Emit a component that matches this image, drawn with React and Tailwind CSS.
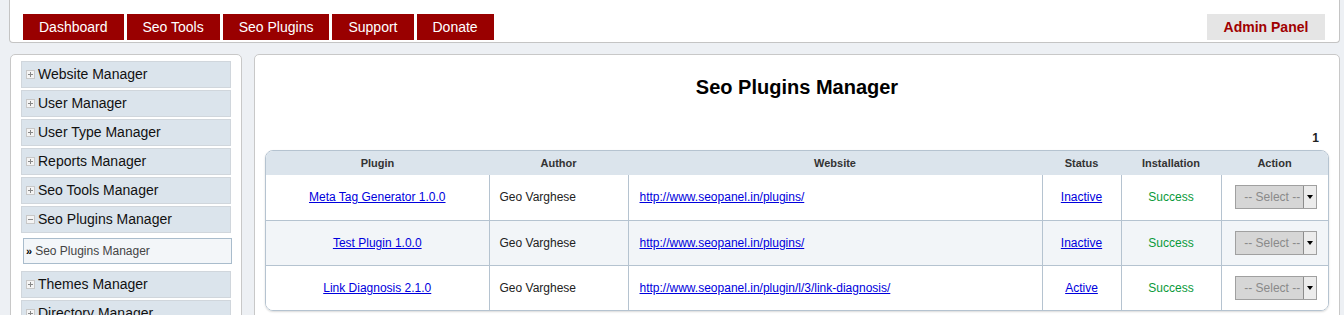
import { useState } from 'react';

const tabs = ['Dashboard', 'Seo Tools', 'Seo Plugins', 'Support', 'Donate'];

const menu = [
  'Website Manager',
  'User Manager',
  'User Type Manager',
  'Reports Manager',
  'Seo Tools Manager',
  'Seo Plugins Manager',
  'Themes Manager',
  'Directory Manager',
];

const plugins = [
  { name: 'Meta Tag Generator 1.0.0', author: 'Geo Varghese', site: 'http://www.seopanel.in/plugins/', status: 'Inactive' },
  { name: 'Test Plugin 1.0.0', author: 'Geo Varghese', site: 'http://www.seopanel.in/plugins/', status: 'Inactive' },
  { name: 'Link Diagnosis 2.1.0', author: 'Geo Varghese', site: 'http://www.seopanel.in/plugin/l/3/link-diagnosis/', status: 'Active' },
];

function Toggle({ open }) {
  return (
    <span className="flex h-[9px] w-[9px] items-center justify-center border border-[#c8c8c8] bg-[#f4f4f4]">
      <span className="relative block h-[5px] w-[5px]">
        <span className="absolute left-0 top-[2px] h-px w-[5px] bg-[#888]" />
        {!open && <span className="absolute left-[2px] top-0 h-[5px] w-px bg-[#888]" />}
      </span>
    </span>
  );
}

function SelectBox() {
  return (
    <div className="mx-auto flex h-[24px] w-[82px] border border-[#a0a0a0] bg-[#d6d6d6]">
      <span className="flex-1 pl-[5px] text-[12px] leading-[22px] text-[#8a8a8a]">-- Select --</span>
      <span className="flex w-[13px] items-center justify-center border-l border-[#8c8c8c] bg-[#ececec]">
        <span className="h-0 w-0 border-x-[3px] border-t-[4px] border-x-transparent border-t-black" />
      </span>
    </div>
  );
}

export default function App() {
  const [active] = useState('Seo Plugins Manager');

  return (
    <div className="h-[315px] overflow-hidden bg-[#edf0f4] font-['Liberation_Sans',Arial,sans-serif]">
      {/* top bar */}
      <div className="ml-[9px] mr-[4px] flex h-[43px] items-end justify-between rounded-b-[4px] border-x border-b border-[#c4c4c4] bg-white pb-[2px] pl-[13px] pr-[14px]">
        <div className="flex gap-[3px]">
          {tabs.map(t => (
            <div key={t} className="flex h-[26px] items-center bg-[#990000] px-4 text-[14px] text-white">
              {t}
            </div>
          ))}
        </div>
        <div className="flex h-[26px] w-[118px] items-center justify-center bg-[#e5e5e5] text-[14px] font-bold text-[#a00000]">
          Admin Panel
        </div>
      </div>

      <div className="mt-[11px] flex gap-[12px] pl-[10px] pr-[4px]">
        {/* sidebar */}
        <div className="h-[300px] w-[232px] shrink-0 rounded-t-[5px] border border-[#c8c8c8] bg-white px-[10px] pt-[6px]">
          <div className="flex flex-col gap-[2px]">
            {menu.map(m => (
              <div key={m}>
                <div className="flex h-[27px] items-center gap-[3px] border border-[#d0d6dc] bg-[#dbe4ec] pl-[4px] text-[14px] text-[#111]">
                  <Toggle open={m === active} />
                  {m}
                </div>
                {m === active && (
                  <div className="mb-[5px] mt-[5px] pl-[2px]">
                    <div className="-mr-px flex h-[26px] items-center border border-[#a9bccc] bg-[#f3f6f9] pl-[2px] text-[12px] text-[#444]">
                      <span className="mr-[3px] text-[11px] font-bold text-black">»</span>
                      Seo Plugins Manager
                    </div>
                  </div>
                )}
              </div>
            ))}
          </div>
        </div>

        {/* main */}
        <div className="h-[300px] flex-1 rounded-t-[5px] border border-[#c8c8c8] bg-white px-[10px]">
          <h1 className="mt-[20px] text-center text-[20px] font-bold leading-[24px] text-black">Seo Plugins Manager</h1>
          <div className="mt-[32px] pr-[10px] text-right text-[12px] font-bold leading-[14px] text-[#222]">1</div>
          <div className="mt-[5px] overflow-hidden rounded-[8px] border border-[#b5c3d0] shadow-[0_1px_2px_rgba(0,0,0,0.15)]">
            <table className="w-full table-fixed border-collapse text-[12px]">
              <colgroup>
                <col className="w-[223px]" />
                <col className="w-[139px]" />
                <col className="w-[414px]" />
                <col className="w-[79px]" />
                <col className="w-[100px]" />
                <col />
              </colgroup>
              <thead>
                <tr className="h-[24px] bg-[#dbe4ec] text-[11px] font-bold text-[#333]">
                  <th>Plugin</th>
                  <th>Author</th>
                  <th>Website</th>
                  <th>Status</th>
                  <th>Installation</th>
                  <th>Action</th>
                </tr>
              </thead>
              <tbody>
                {plugins.map((p, i) => (
                  <tr key={p.name} className={`h-[45px] ${i % 2 === 1 ? 'bg-[#f2f5f8]' : 'bg-white'} ${i > 0 ? 'border-t border-[#b5c3d0]' : ''}`}>
                    <td className="text-center">
                      <a href="#" className="text-[#0000dd] underline">{p.name}</a>
                    </td>
                    <td className="border-l border-[#b5c3d0] pl-[10px] text-[#222]">{p.author}</td>
                    <td className="border-l border-[#b5c3d0] pl-[11px]">
                      <a href="#" className="text-[#0000dd] underline">{p.site}</a>
                    </td>
                    <td className="border-l border-[#b5c3d0] text-center">
                      <a href="#" className="text-[#0000dd] underline">{p.status}</a>
                    </td>
                    <td className="border-l border-[#b5c3d0] text-center text-[#0a9a3a]">Success</td>
                    <td className="border-l border-[#b5c3d0] text-center">
                      <div className="pl-[3px]">
                        <SelectBox />
                      </div>
                    </td>
                  </tr>
                ))}
              </tbody>
            </table>
          </div>
        </div>
      </div>
    </div>
  );
}
